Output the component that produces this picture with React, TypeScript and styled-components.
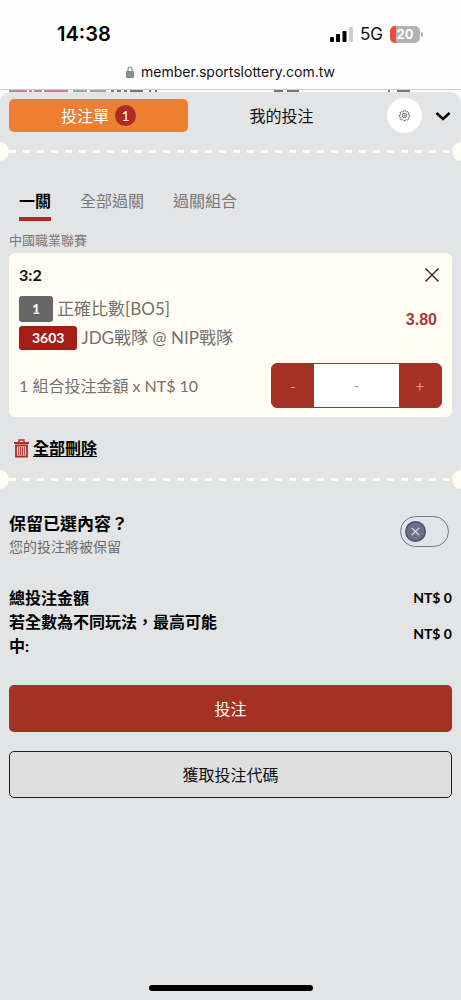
import React, { useState } from "react";
import styled, { createGlobalStyle } from "styled-components";

const cream = "#fffcf4";
const red = "#a53125";
const grey = "#e3e4e6";

const GlobalStyle = createGlobalStyle`
  * { box-sizing: border-box; }
  body { margin: 0; background: ${grey}; }
  button, input { font: inherit; color: inherit; }
  button { margin: 0; padding: 0; border: 0; background: none; cursor: pointer; }
`;

const Page = styled.div`
  min-height: 100vh;
  display: flex;
  flex-direction: column;
  font: 400 16px/24px Lato, "Noto Sans CJK TC", sans-serif;
  color: #111;
  background: ${grey};
`;

const BrowserTop = styled.header`
  background: #fefefe;
  font-family: Inter, sans-serif;
  border-bottom: 1px solid #cfcfd0;
`;

const StatusBar = styled.div`
  display: flex;
  align-items: center;
  justify-content: space-between;
  padding: 22px 38px 0 57px;
`;

const Clock = styled.time`
  font-size: 20px;
  font-weight: 600;
  color: #000;
`;

const StatusIcons = styled.div`
  display: flex;
  align-items: center;
  gap: 7px;
  font-size: 17px;
`;

const Battery = styled.div`
  display: flex;
  align-items: center;
  gap: 1px;
  &::after {
    content: "";
    width: 2px;
    height: 5px;
    border-radius: 0 2px 2px 0;
    background: #b5b5b5;
  }
`;

const BatteryLevel = styled.div`
  width: 30px;
  height: 17px;
  border-radius: 5px;
  background: linear-gradient(to right, #eb4d3d 6px, #b3b3b3 6px);
  color: #fff;
  font-size: 13px;
  font-weight: 700;
  line-height: 17px;
  text-align: center;
`;

const Address = styled.div`
  display: flex;
  align-items: center;
  justify-content: center;
  gap: 7px;
  padding: 14px 0 5px;
  font-size: 14px;
`;

const Behind = styled.div`
  display: flex;
  flex-direction: column;
  flex: 1;
  background: #fefefe;
`;

const Remnants = styled.svg`
  display: block;
`;

const Sheet = styled.main`
  flex: 1;
  display: flex;
  flex-direction: column;
  border-radius: 10px 10px 0 0;
  background: ${grey};
`;

const TopRow = styled.div`
  display: flex;
  align-items: center;
  padding: 6px 9px 9px;
`;

const SlipTab = styled.button`
  flex: 0 0 179px;
  height: 33px;
  display: flex;
  align-items: center;
  justify-content: center;
  gap: 6px;
  border-radius: 5px;
  background: #ed8030;
  color: #fff;
`;

const Count = styled.span`
  width: 21px;
  height: 21px;
  border-radius: 50%;
  background: #b12a20;
  font-size: 14px;
  line-height: 21px;
`;

const MyBets = styled.button`
  flex: 1;
  padding-right: 12px;
`;

const RoundButton = styled.button`
  width: 35px;
  height: 35px;
  border-radius: 50%;
  background: #fff;
  display: grid;
  place-items: center;
`;

const IconButton = styled.button`
  display: grid;
  place-items: center;
`;

const Collapse = styled(IconButton)`
  margin-left: 12px;
  width: 18px;
`;

const Perforation = styled.div`
  height: 19px;
  overflow: hidden;
  display: flex;
  align-items: center;
  &::before,
  &::after {
    content: "";
    flex: 0 0 19px;
    height: 19px;
    border-radius: 50%;
    background: ${cream};
    margin-left: -10px;
  }
  &::after {
    margin: 0 -10px 0 0;
  }
`;

const Dashes = styled.span`
  flex: 1;
  height: 3px;
  background: repeating-linear-gradient(to right, ${cream} 0 7px, transparent 7px 14px);
`;

const Tabs = styled.nav`
  display: flex;
  gap: 29px;
  padding: 28px 19px 0;
`;

const Tab = styled.button<{ $active?: boolean }>`
  height: 32px;
  display: flex;
  align-items: flex-start;
  color: ${(p) => (p.$active ? "#000" : "#77787a")};
  font-weight: ${(p) => (p.$active ? 700 : 400)};
  border-bottom: 4px solid ${(p) => (p.$active ? "#b32921" : "transparent")};
`;

const League = styled.h2`
  margin: 9px 9px 3px;
  font-size: 13px;
  font-weight: 400;
  line-height: 20px;
  color: #77787a;
`;

const Card = styled.article`
  margin: 0 9px;
  padding: 9px 10px;
  border-radius: 6px;
  background: ${cream};
  color: #727270;
`;

const Between = styled.div`
  display: flex;
  align-items: center;
  justify-content: space-between;
`;

const Pick = styled.h3`
  margin: 0;
  font-size: 16px;
  font-weight: 700;
  line-height: 26px;
  color: #111;
`;

const CloseButton = styled(IconButton)`
  margin-right: 2px;
`;

const Match = styled.div`
  display: grid;
  gap: 3px;
  padding-top: 8px;
  font-size: 17px;
`;

const MatchLine = styled.div`
  display: flex;
  align-items: center;
  gap: 4px;
  height: 26px;
`;

const Tag = styled.span<{ $code?: boolean }>`
  padding: 0 13px;
  height: ${(p) => (p.$code ? 24 : 26)}px;
  border-radius: 3px;
  background: ${(p) => (p.$code ? "#a41e16" : "#676767")};
  color: #fff;
  font-size: 14px;
  font-weight: 700;
  line-height: ${(p) => (p.$code ? 24 : 26)}px;
`;

const Odds = styled.strong`
  padding-right: 5px;
  font: 700 16px/24px "Liberation Sans", sans-serif;
  color: #ad3a2f;
`;

const StakeRow = styled(Between)`
  padding-top: 12px;
`;

const Stepper = styled.div`
  display: flex;
  width: 171px;
  height: 45px;
  border: 1px solid ${red};
  border-radius: 6px;
  overflow: hidden;
  background: ${red};
`;

const StepButton = styled.button`
  flex: 0 0 42px;
  color: #f3d9d5;
  font-weight: 300;
`;

const Stake = styled.input`
  flex: 1;
  min-width: 0;
  border: 0;
  padding: 0;
  background: #fff;
  text-align: center;
  font-size: 14px;
  &::placeholder {
    color: #999;
    opacity: 1;
  }
`;

const DeleteAll = styled.button`
  align-self: flex-start;
  display: flex;
  align-items: center;
  gap: 4px;
  margin: 19px 14px 10px;
  font-weight: 700;
  color: #000;
  text-decoration: underline;
  text-underline-offset: 2px;
`;

const KeepRow = styled(Between)`
  align-items: flex-start;
  padding: 23px 12px 0 9px;
`;

const KeepTitle = styled.label`
  display: block;
  font-size: 17px;
  font-weight: 700;
  color: #000;
`;

const KeepNote = styled.span`
  display: block;
  font-size: 14px;
  line-height: 22px;
  color: #6b6b6d;
`;

const Switch = styled.span`
  position: relative;
  display: block;
  width: 49px;
  height: 31px;
  margin-top: 4px;
`;

const SwitchInput = styled.input`
  appearance: none;
  display: block;
  width: 100%;
  height: 100%;
  margin: 0;
  border: 1px solid #77738f;
  border-radius: 16px;
  cursor: pointer;
`;

const Knob = styled.svg<{ $on: boolean }>`
  position: absolute;
  top: 5px;
  left: ${(p) => (p.$on ? 23 : 5)}px;
  pointer-events: none;
`;

const Totals = styled.dl`
  display: grid;
  grid-template-columns: minmax(0, 214px) auto;
  justify-content: space-between;
  align-items: center;
  margin: 0;
  padding: 28px 9px 0;
  color: #000;
  font-weight: 700;
  dd {
    margin: 0;
    font-size: 14px;
  }
`;

const Actions = styled.div`
  display: grid;
  gap: 19px;
  padding: 27px 9px 0;
`;

const Action = styled.button<{ $primary?: boolean }>`
  height: 47px;
  border-radius: 5px;
  border: ${(p) => (p.$primary ? "0" : "1px solid #222")};
  background: ${(p) => (p.$primary ? red : "#dfdfdf")};
  color: ${(p) => (p.$primary ? "#fff" : "#111")};
`;

const HomeBar = styled.div`
  width: 164px;
  height: 6px;
  margin: auto auto 9px;
  border-radius: 3px;
  background: #000;
`;

const SignalIcon = () => (
  <svg width="23" height="15" viewBox="0 0 23 15" aria-hidden="true">
    <rect x="0" y="10" width="4" height="5" rx="1" />
    <rect x="6" y="7" width="4" height="8" rx="1" />
    <rect x="12.5" y="4" width="4" height="11" rx="1" />
    <rect x="19" y="0" width="4" height="15" rx="1" fill="#cfcfcf" />
  </svg>
);

const LockIcon = () => (
  <svg width="8" height="12" viewBox="0 0 8 12" aria-hidden="true">
    <path d="M2 6V3.2a2 2.2 0 0 1 4 0V6" fill="none" stroke="#8c8c8c" strokeWidth="1.2" />
    <rect x="0" y="5" width="8" height="7" rx="1" fill="#8c8c8c" />
  </svg>
);

const GearIcon = () => (
  <svg width="11" height="11" viewBox="0 0 22 22" fill="none" stroke="#555" strokeWidth="1.6" aria-hidden="true">
    <path d="M9 1.5h4l.6 2.2 1.6.7 2.2-1.2 2.600 2.600-1.200 2.200.7 1.600 1.500.4v3l-1.500.7-.7 1.600 1.200 2.200-2.600 2.600-2.200-1.200-1.600.7-.6 1.400H9l-.6-1.400-1.600-.7-2.200 1.200L2 17.500l1.200-2.200-.7-1.600-1.500-.7v-3l1.500-.4.700-1.600L2 5.800l2.600-2.600 2.200 1.200 1.600-.7z" />
    <circle cx="11" cy="11" r="4.500" />
    <circle cx="11" cy="11" r="1.400" />
  </svg>
);

const ChevronIcon = () => (
  <svg width="16" height="10" viewBox="0 0 16 10" fill="none" stroke="#000" strokeWidth="2.4" aria-hidden="true">
    <path d="M1.5 2 8 8l6.500-6" />
  </svg>
);

const CrossIcon = () => (
  <svg width="16" height="16" viewBox="0 0 16 16" stroke="#222" strokeWidth="1.3" aria-hidden="true">
    <path d="m1.500 1.500 13 13m0-13-13 13" />
  </svg>
);

const TrashIcon = () => (
  <svg width="15" height="19" viewBox="0 0 15 19" fill="none" stroke="#ad2c22" aria-hidden="true">
    <path d="M5 3V1h5v2" strokeWidth="1.3" />
    <path d="M0 4h15" strokeWidth="2" />
    <path d="M2 6.500h11v11H2z" strokeWidth="1.8" />
    <path d="M4.700 8v8M6.600 8v8M8.400 8v8M10.300 8v8" strokeWidth="1" />
  </svg>
);

export default function App() {
  const [keep, setKeep] = useState(false);
  return (
    <Page>
      <GlobalStyle />
      <BrowserTop>
        <StatusBar>
          <Clock>14:38</Clock>
          <StatusIcons>
            <SignalIcon />
            <span>5G</span>
            <Battery>
              <BatteryLevel>20</BatteryLevel>
            </Battery>
          </StatusIcons>
        </StatusBar>
        <Address>
          <LockIcon />
          <span>member.sportslottery.com.tw</span>
        </Address>
      </BrowserTop>

      <Behind>
        <Remnants width="100%" height="2" aria-hidden="true">
          <path d="M9 0h18v2H9zM29 0h3v2h-3zM34 0h8v2h-8zM44 0h24v2H44z" fill="#c98385" />
          <path d="M73 0h14v2H73zM90 0h16v2H90z" fill="#a5a2a4" />
          <path d="M111 0h3v2h-3zM117 0h4v2h-4zM124 0h3v2h-3zM130 0h13v2h-13zM149 0h2v2h-2zM155 0h2v2h-2zM274 0h9v2h-9zM287 0h12v2h-12zM388 0h2v2h-2zM397 0h13v2h-13z" fill="#77777a" />
        </Remnants>
        <Sheet>
          <TopRow>
            <SlipTab>
              投注單 <Count>1</Count>
            </SlipTab>
            <MyBets>我的投注</MyBets>
            <RoundButton aria-label="設定">
              <GearIcon />
            </RoundButton>
            <Collapse aria-label="收合">
              <ChevronIcon />
            </Collapse>
          </TopRow>
          <Perforation>
            <Dashes />
          </Perforation>

          <Tabs>
            <Tab $active>一關</Tab>
            <Tab>全部過關</Tab>
            <Tab>過關組合</Tab>
          </Tabs>
          <League>中國職業聯賽</League>

          <Card>
            <Between>
              <Pick>3:2</Pick>
              <CloseButton aria-label="移除">
                <CrossIcon />
              </CloseButton>
            </Between>
            <Between>
              <Match>
                <MatchLine>
                  <Tag>1</Tag>
                  <span>正確比數[BO5]</span>
                </MatchLine>
                <MatchLine>
                  <Tag $code>3603</Tag>
                  <span>JDG戰隊 @ NIP戰隊</span>
                </MatchLine>
              </Match>
              <Odds>3.80</Odds>
            </Between>
            <StakeRow>
              <label htmlFor="stake">1 組合投注金額 x NT$ 10</label>
              <Stepper>
                <StepButton aria-label="減少">-</StepButton>
                <Stake id="stake" inputMode="numeric" placeholder="-" />
                <StepButton aria-label="增加">+</StepButton>
              </Stepper>
            </StakeRow>
          </Card>

          <DeleteAll>
            <TrashIcon />
            全部刪除
          </DeleteAll>
          <Perforation>
            <Dashes />
          </Perforation>

          <KeepRow>
            <div>
              <KeepTitle htmlFor="keep">保留已選內容？</KeepTitle>
              <KeepNote>您的投注將被保留</KeepNote>
            </div>
            <Switch>
              <SwitchInput id="keep" type="checkbox" role="switch" checked={keep} onChange={(e) => setKeep(e.target.checked)} />
              <Knob $on={keep} width="21" height="21" viewBox="0 0 21 21" aria-hidden="true">
                <circle cx="10.5" cy="10.5" r="9.8" fill="#706f88" stroke="#4f4c70" strokeWidth="1.4" />
                <path d="m6.800 6.800 7.400 7.400m0-7.400-7.400 7.400" stroke="#e8e8ee" strokeWidth="1.2" />
              </Knob>
            </Switch>
          </KeepRow>

          <Totals>
            <dt>總投注金額</dt>
            <dd>NT$ 0</dd>
            <dt>若全數為不同玩法，最高可能中:</dt>
            <dd>NT$ 0</dd>
          </Totals>

          <Actions>
            <Action $primary>投注</Action>
            <Action>獲取投注代碼</Action>
          </Actions>
          <HomeBar />
        </Sheet>
      </Behind>
    </Page>
  );
}
